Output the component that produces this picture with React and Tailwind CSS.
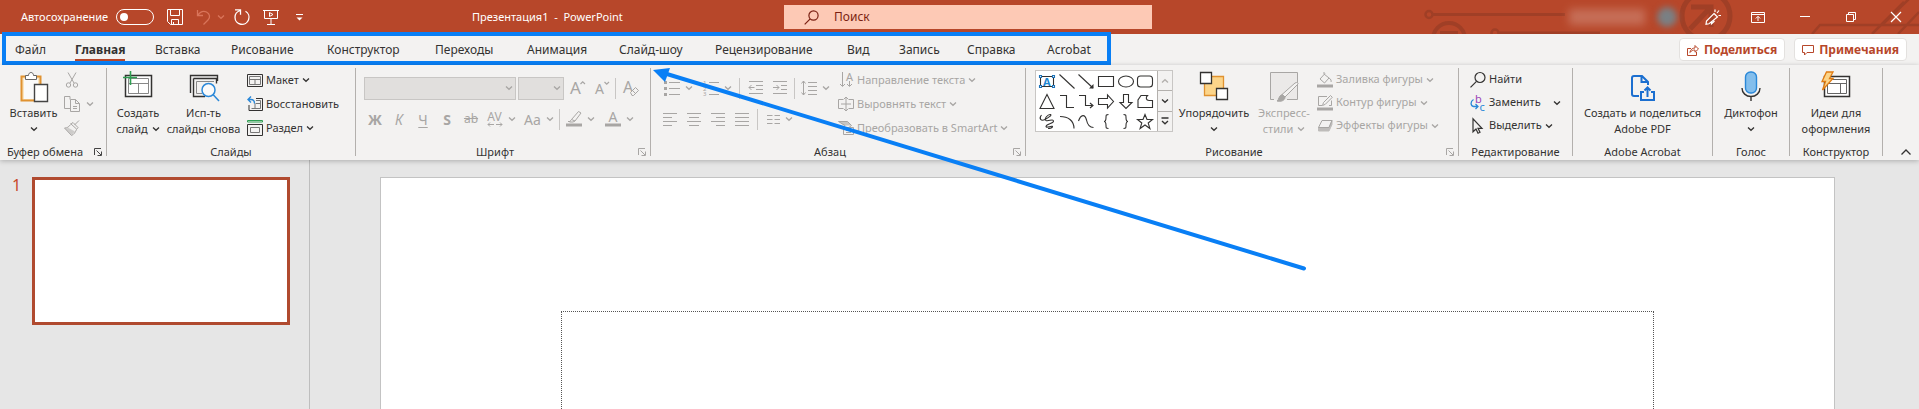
import React from "react";

const TABS = [
  ["Файл", "w-15"],
  ["Главная", "w-20"],
  ["Вставка", "w-19"],
  ["Рисование", "w-24"],
  ["Конструктор", "w-27"],
  ["Переходы", "w-23"],
  ["Анимация", "w-23"],
  ["Слайд-шоу", "w-24"],
  ["Рецензирование", "w-33"],
  ["Вид", "w-13"],
  ["Запись", "w-17"],
  ["Справка", "w-20"],
  ["Acrobat", "w-16"],
];

function Svg({ w = 16, h = 16, className = "", children, sw = 1 }) {
  return (
    <svg width={w} height={h} viewBox={`0 0 ${w} ${h}`} fill="none" stroke="currentColor" strokeWidth={sw} className={`shrink-0 overflow-visible ${className}`} aria-hidden="true">
      {children}
    </svg>
  );
}

function Glyph({ x, y, size, color = "currentColor", bold, children }) {
  return (
    <text x={x} y={y} fontSize={size} fontWeight={bold ? 700 : 400} fill={color} stroke="none">
      {children}
    </text>
  );
}

function Chevron({ className = "" }) {
  return (
    <Svg w={8} h={8} sw={1.3} className={className}>
      <path d="M1 2.500 4 5.300 7 2.500" />
    </Svg>
  );
}

function Launcher({ dim }) {
  return (
    <button aria-label="Параметры группы" className={`absolute right-1 bottom-0 ${dim ? "text-[#a8a6a4]" : "text-[#444444]"}`}>
      <Svg w={8} h={8}>
        <path d="M.500 7V.500H7M2.500 2.500 7 7M7.500 3.500v4h-4" />
      </Svg>
    </button>
  );
}

function Group({ label, width, launcher, dim, children }) {
  return (
    <section className={`relative flex shrink-0 flex-col border-r border-[#b3b0ad] ${width}`}>
      <div className="flex h-[78px]">{children}</div>
      <div className={`h-[10px] text-center leading-[11px] whitespace-nowrap ${launcher ? "pr-4" : ""}`}>{label}</div>
      {launcher && <Launcher dim={dim} />}
    </section>
  );
}

function Big({ icon, line1, line2, chevron, width, dim }) {
  return (
    <button className={`flex shrink-0 flex-col items-center pt-1 leading-4 whitespace-nowrap ${width} ${dim ? "text-[#a8a6a4]" : ""}`}>
      <span className="flex h-[33px] items-start">{icon}</span>
      <span>{line1}</span>
      <span className="flex h-4 items-center gap-1">
        {line2}
        {chevron && <Chevron />}
      </span>
    </button>
  );
}

function Row({ icon, text, chevron, dim, height = "h-6", gap = "gap-[3px]" }) {
  return (
    <button className={`flex items-center gap-[3px] whitespace-nowrap ${height} ${dim ? "text-[#a8a6a4]" : ""}`}>
      {icon}
      <span className={`flex items-center ${gap}`}>
        {text}
        {chevron && <Chevron />}
      </span>
    </button>
  );
}

function Cell({ label, width = "w-6", chevron, children }) {
  return (
    <button aria-label={label} className={`flex h-6 shrink-0 items-center justify-center gap-[5px] ${width}`}>
      {children}
      {chevron && <Chevron />}
    </button>
  );
}

function Divider() {
  return <span className="h-[21px] w-px shrink-0 bg-[#c8c6c4]" />;
}

function Lines({ rows }) {
  return (
    <Svg>
      {rows.map(([a, b], i) => (
        <path key={i} d={`M${a} ${2.5 + i * 4}H${b}`} />
      ))}
    </Svg>
  );
}

function TitleBar() {
  return (
    <header className="relative flex h-[34px] shrink-0 items-center overflow-hidden bg-[#b7472a] text-white">
      <svg className="absolute top-0 right-0" width="499" height="34" viewBox="0 0 499 34" fill="none" stroke="#a03f26" aria-hidden="true">
        <circle cx="9" cy="14.500" r="3.500" strokeWidth="2.500" />
        <path d="M13 14.500H145" strokeWidth="3" />
        <circle cx="29" cy="39" r="16" strokeWidth="4" />
        <path d="M20 33H38" strokeWidth="4" />
        <circle cx="75" cy="33" r="3.500" strokeWidth="2.500" />
        <path d="M79 33H180" strokeWidth="3" />
        <circle cx="286" cy="16" r="24" strokeWidth="5" />
        <path d="M271 7h20v20M291 7 270 29" strokeWidth="5" />
        <path d="M392 34 400 25H462L490 -2M452 34 484 2M462 25H499M478 34 499 12" strokeWidth="2.500" />
      </svg>
      <label className="relative flex items-center gap-2 pl-[21px]">
        Автосохранение
        <input type="checkbox" className="peer sr-only" />
        <span className="flex h-4 w-[38px] items-center rounded-full border border-white pl-[3px]">
          <span className="size-2 rounded-full bg-white" />
        </span>
      </label>
      <div className="relative flex items-center pl-3">
        <button aria-label="Сохранить" className="flex w-[18px] justify-center">
          <Svg><path d="M.500.500h15v15h-12l-3-3zM3.500.500v6h9v-6M4.500 15.500v-5h7v5M6.500 13v2.500" /></Svg>
        </button>
        <button aria-label="Отменить" className="ml-3 flex items-center gap-[5px] text-[#d9745a]">
          <Svg sw={1.3}><path d="M1.500 1v5.500H7M1.500 6.500C4 3 7.500 1.500 10.500 3c3.500 1.800 4 5.500 1.500 8l-4.500 4.500" /></Svg>
          <Chevron />
        </button>
        <button aria-label="Повторить" className="ml-[9px]">
          <Svg sw={1.3}><path d="M1 .800h5.500v5M6.200 1.500C3 2.500 1 5 1 8.300a7 7 0 1 0 10.500-6" /></Svg>
        </button>
        <button aria-label="Начать показ" className="ml-[13px]">
          <Svg><path d="M0 1.500h16M1.500 1.500v8h13v-8M8 9.500v6M4 15.500h8M6.500 3.500v4l3.500-2z" /></Svg>
        </button>
        <button aria-label="Настройка панели" className="ml-4">
          <Svg w={9} h={9}><path d="M1 1.500h7" /><path d="M1.500 4.500h6l-3 3z" fill="currentColor" stroke="none" /></Svg>
        </button>
      </div>
      <h1 className="absolute left-[472px] whitespace-pre">Презентация1  -  PowerPoint</h1>
      <label className="absolute inset-y-[5px] left-[784px] flex w-[368px] items-center bg-[#fdc9b5] pl-5 text-[12px] text-[#7a1f12]">
        <Svg w={15} h={15} sw={1.2}><circle cx="9.500" cy="5.500" r="4.600" /><path d="M6.200 8.800.700 14.300" /></Svg>
        <input aria-label="Поиск" placeholder="Поиск" className="ml-[15px] w-60 bg-transparent outline-none placeholder:text-[#7a1f12]" />
      </label>
      <div className="relative ml-auto flex items-center">
        <span className="mr-3 h-4 w-[76px] bg-[#cd7f6b] opacity-70 blur-[4px]" />
        <span className="mr-7 size-5 rounded-full bg-[#7a8084] blur-[3px]" />
        <button aria-label="Новые возможности" className="w-[18px]">
          <Svg sw={1.2}><path d="M9 4.500 12.500 8 4 14.800 1 15.300 1.500 12zM6.500 13v1.800L9.500 12M10 3V.500M12 4l2-2.500M13.500 6.500H16" /></Svg>
        </button>
        <button aria-label="Параметры ленты" className="ml-7 w-4">
          <Svg w={14} h={11}><path d="M.500.500h13v10H.500zM.500 2.500h13M7 9V4.500M4.800 6.500 7 4.300l2.200 2.200" /></Svg>
        </button>
        <button aria-label="Свернуть" className="ml-8 w-3"><Svg w={12} h={12}><path d="M1 5.500h10" /></Svg></button>
        <button aria-label="Восстановить окно" className="ml-[34px] w-3"><Svg w={12} h={12}><path d="M1.500 3.500h7v7h-7zM3.500 3.500v-2h7v7h-2" /></Svg></button>
        <button aria-label="Закрыть" className="mr-[17px] ml-[33px] w-3"><Svg w={12} h={12} sw={1.2}><path d="M1 1l10 10M11 1 1 11" /></Svg></button>
      </div>
    </header>
  );
}

function TabBar() {
  return (
    <div className="flex h-[31px] shrink-0 items-center justify-between text-[12px]">
      <nav className="relative flex h-full items-start pt-1.5 pl-[15px]">
        {TABS.map(([name, width]) => (
          <div key={name} className={`flex ${width}`}>
            <a href="#" className={`border-b-2 leading-[19px] whitespace-nowrap ${name === "Главная" ? "border-[#b7472a] font-bold" : "border-transparent"}`}>
              {name}
            </a>
          </div>
        ))}
        <span className="pointer-events-none absolute -top-0.5 right-0 bottom-0 left-0.5 border-4 border-[#097ff5]" />
      </nav>
      <div className="flex gap-[9px] pr-3 font-bold text-[#b7472a]">
        <button className="flex h-[23px] items-center gap-[5px] rounded-sm border border-[#e3e1df] bg-white px-[7px]">
          <Svg w={12} h={12}><path d="M4 4.500H.500v7h9V8M2.800 8.500C3.500 5.500 5.500 4 8 4V1.500L11.500 5 8 8.200V6C6 6 4.500 6.800 2.800 8.500z" /></Svg>
          Поделиться
        </button>
        <button className="flex h-[23px] items-center gap-[5px] rounded-sm border border-[#e3e1df] bg-white px-[7px]">
          <Svg w={12} h={12}><path d="M.500 1.500h11v7H5L2.500 11V8.500h-2z" /></Svg>
          Примечания
        </button>
      </div>
    </div>
  );
}

const SHAPES = [
  <g key="t"><path d="M2 3.500h12M2 13.500h12M1.500 4v9M14.500 4v9" /><path d="M.500 2.500h2v2h-2zM13.500 2.500h2v2h-2zM.500 12.500h2v2h-2zM13.500 12.500h2v2h-2z" fill="#fff" stroke="#1e73b8" /><Glyph x="4" y="12.500" size="11" bold color="#1e86d2">A</Glyph></g>,
  <path key="l" d="M.500 1.500 15.500 15.500" />,
  <g key="a"><path d="M.500 1.500 15 15" /><path d="M15.500 11v4.500H11z" fill="currentColor" stroke="none" /></g>,
  <path key="r" d="M.500 3.500h15v10H.500z" />,
  <ellipse key="e" cx="8" cy="8.500" rx="7.500" ry="5.500" />,
  <rect key="rr" x=".5" y="3" width="15" height="11" rx="3" />,
  <path key="tr" d="M8 1.500 15 15.500H1z" />,
  <path key="el" d="M1 2.500h6.500v12H15" />,
  <g key="ea"><path d="M1 2.500h6.500v10H14" /><path d="M12 10l3 2.500L12 15" /></g>,
  <path key="ar" d="M.500 5.500h9V2l6 6.500-6 6.500v-3.500h-9z" />,
  <path key="ad" d="M5.500 1.500h5v8h3.500l-6 6-6-6h3.500z" />,
  <path key="fr" d="M4 2.500h6.500c-2 2-1.500 5 1.500 5h3.500v7H1V7z" />,
  <path key="sc" d="M2.500 2C-.500 5.500 2 8.500 6 6.500c4-2 7-4.500 5.500-5C9 1 4.500 6 7 7.500c2.500 1 7-2 7.500.500.500 2.500-7.500 3-7.500 5.500 0 2 6.500-1.500 6.500.300C13 15 11 15.500 9 15.500" />,
  <path key="ac" d="M1 3.500c8 0 14 4 14 12" />,
  <path key="cv" d="M.500 8C3 1 7 1 8.500 7c1 5 3.500 7.500 7 7.500" />,
  <path key="lb" d="M10.500 1.500c-2.500 0-2.500.500-2.500 3s0 4-2 4c2 0 2 1.500 2 4s0 3 2.500 3" />,
  <path key="rb" d="M5.500 1.500c2.500 0 2.500.500 2.500 3s0 4 2 4c-2 0-2 1.500-2 4s0 3-2.500 3" />,
  <path key="st" d="M8 1.500 10 6.500h5.500l-4.300 3.500 1.700 5.500L8 12l-4.900 3.500L4.800 10 .500 6.500H6z" />,
];

function Ribbon() {
  return (
    <div className="relative z-10 flex shrink-0 items-start pt-[3px] pb-1 shadow-[0_1px_5px_rgba(0,0,0,0.25)]">
      <Group label="Буфер обмена" width="w-[107px]" launcher>
        <Big width="ml-2 w-[51px]" line1="Вставить" chevron icon={
          <Svg w={30} h={31}>
            <path d="M2.500 4.500h19v24h-19z" stroke="#e09230" strokeWidth="2" fill="#fbe5bf" />
            <path d="M5 7h14v20H5z" fill="#fafafa" stroke="none" />
            <path d="M6.500 7.500v-4h3c0-4 5-4 5 0h3v4z" fill="#fff" stroke="#666" />
            <path d="M15.500 12.500h13v17h-13z" fill="#fff" stroke="#444" strokeWidth="1.400" />
          </Svg>} />
        <div className="ml-[5px] flex flex-col text-[#a8a6a4]">
          <button aria-label="Вырезать" className="flex h-6 items-center">
            <Svg><path d="M4 .500 10 11M12 .500 6 11" /><circle cx="4.500" cy="13" r="2.200" /><circle cx="11.500" cy="13" r="2.200" /></Svg>
          </button>
          <button aria-label="Копировать" className="flex h-6 items-center gap-1.5">
            <Svg><path d="M6 3.500V.500H.500v12H6M6.500 3.500h5l4 4v8h-9zM11.500 3.500v4h4M9 10.500h4M9 12.500h4" /></Svg>
            <Chevron />
          </button>
          <button aria-label="Формат по образцу" className="flex h-6 items-center">
            <Svg><path d="M15 .500 10.500 5M6.500 3.500l6 5.500M7 4l2-1.500 5 5-1.500 2M6.500 4.500C5 7 3 8 .500 8l7 7.500c2.500-1 4-3.500 5-6" /><path d="M4.500 8 1 8.500l6.500 6.500 3.500-3.500z" fill="currentColor" opacity=".5" stroke="none" /></Svg>
          </button>
        </div>
      </Group>

      <Group label="Слайды" width="w-[249px]">
        <Big width="ml-1.5 w-[50px]" line1="Создать" line2="слайд" chevron icon={
          <Svg w={30} h={30}>
            <path d="M2.500 3.500h26v21h-26z" strokeWidth="1.500" fill="#fff" />
            <path d="M5.500 6.500h20v15h-20zM15.500 11.500v10M5.500 11.500h20" stroke="#888" />
            <path d="M7.500 -1v14M0 5.500h14" stroke="#2f9e52" strokeWidth="1.600" />
          </Svg>} />
        <Big width="w-[81px]" line1="Исп-ть" line2="слайды снова" icon={
          <Svg w={32} h={32}>
            <path d="M2.500 21V3.500h27V9M5.500 6.500h23v5M5.500 6.500v18H17" strokeWidth="1.400" />
            <path d="M8.500 9.500H26M8.500 9.500v12H14" stroke="#888" />
            <circle cx="20.500" cy="18" r="6.500" stroke="#2b88d8" strokeWidth="1.500" fill="#fafafa" />
            <path d="M25 22.500 31 29" stroke="#2b88d8" strokeWidth="1.500" />
          </Svg>} />
        <div className="ml-[3px] flex flex-col">
          <Row text="Макет" chevron icon={<Svg><path d="M.500 2.500h15v12H.500z" /><path d="M2.500 4.500h11v8h-11zM2.500 7.500h11M8 7.500v5" stroke="#777" /></Svg>} />
          <Row text="Восстановить" icon={<Svg><path d="M9 2.500h6.500v12H2V9" /><path d="M9 4.500h4.500v8h-9M8 7v6M9 7.500h4" stroke="#777" /><path d="M4 .500 1 3.500l3 3M1 3.500h3c2.500 0 3.500 1.500 3.500 4" stroke="#2b88d8" strokeWidth="1.400" /></Svg>} />
          <Row text="Раздел" chevron icon={<Svg><path d="M.500.500h15v1.500H.500z" stroke="#2f9e52" /><path d="M.500 4.500h15v11H.500z" /><path d="M3.500 7.500h9v5h-9z" stroke="#777" /></Svg>} />
        </div>
      </Group>

      <Group label="Шрифт" width="w-[295px]" launcher dim>
        <div className="flex flex-col gap-[7px] pt-2 pl-2 text-[#a8a6a4]">
          <div className="flex h-6 items-center">
            <button aria-label="Шрифт" className="flex h-[23px] w-[152px] items-center justify-end border border-[#c8c6c4] bg-[#e1dfdd] pr-0.5"><Chevron /></button>
            <button aria-label="Размер шрифта" className="ml-0.5 flex h-[23px] w-[46px] items-center justify-end border border-[#c8c6c4] bg-[#e1dfdd] pr-0.5"><Chevron /></button>
            <Cell label="Увеличить размер" width="ml-[3px] w-[22px]"><Svg><Glyph x="0" y="13.500" size="17">A</Glyph><path d="M10.500 4l2.200-2.200L15 4" strokeWidth="1.200" /></Svg></Cell>
            <Cell label="Уменьшить размер" width="w-[26px]"><Svg><Glyph x="1" y="13.500" size="14">A</Glyph><path d="M10.500 2l2.200 2.200L15 2" strokeWidth="1.200" /></Svg></Cell>
            <Divider />
            <Cell label="Очистить формат" width="w-[30px]"><Svg><Glyph x="0" y="12.500" size="16">A</Glyph><path d="M7.500 12.500 12.500 7.500l3 3-5 5H9zM9.500 10.500l3 3" fill="#f3f2f1" /></Svg></Cell>
          </div>
          <div className="-ml-px flex h-6 items-center text-[14px]">
            <Cell label="Полужирный"><b>Ж</b></Cell>
            <Cell label="Курсив"><i>К</i></Cell>
            <Cell label="Подчеркнутый"><span className="underline underline-offset-2">Ч</span></Cell>
            <Cell label="Тень"><b>S</b></Cell>
            <Cell label="Зачеркнутый"><s className="text-[12px]">ab</s></Cell>
            <Cell label="Интервал" width="w-9" chevron>
              <span className="flex flex-col items-center text-[12px] leading-[11px]">AV<Svg w={16} h={5}><path d="M7 2.500H1l2-2M1 2.500l2 2M9 2.500h6l-2-2M15 2.500l-2 2" /></Svg></span>
            </Cell>
            <Cell label="Регистр" width="w-10" chevron>Aa</Cell>
            <Divider />
            <Cell label="Выделение" width="w-10" chevron><Svg><path d="M5.500 8.500 12.500.500l2.500 1.500-6 8zM5.500 8.500 3.500 11H7l2-1M2 10.500h2" /><path d="M0 12.500h16v3H0z" fill="currentColor" stroke="none" /></Svg></Cell>
            <Cell label="Цвет текста" width="w-[38px]" chevron><Svg><Glyph x="3.500" y="11" size="14">A</Glyph><path d="M0 12.500h16v3H0z" fill="currentColor" stroke="none" /></Svg></Cell>
          </div>
        </div>
      </Group>

      <Group label="Абзац" width="w-[375px]" launcher dim>
        <div className="flex w-[187px] shrink-0 flex-col gap-[7px] pt-2 pl-2 text-[#a8a6a4]">
          <div className="flex h-6 items-center">
            <Cell label="Маркеры" width="w-[39px]" chevron><Svg><path d="M5 2.500h11M5 8.500h11M5 14.500h11" /><path d="M0 1h3v3H0zM0 7h3v3H0zM0 13h3v3H0z" fill="currentColor" stroke="none" /></Svg></Cell>
            <Cell label="Нумерация" width="w-[39px]" chevron><Svg><path d="M6 2.500h10M6 8.500h10M6 14.500h10" /><Glyph x="0" y="5" size="6">1</Glyph><Glyph x="0" y="10.500" size="6">2</Glyph><Glyph x="0" y="16" size="6">3</Glyph></Svg></Cell>
            <span className="w-0.5" /><Divider />
            <Cell label="Уменьшить отступ" width="ml-1 w-6"><Svg><path d="M1 1.500h14M8 5.500h7M8 9.500h7M1 13.500h14M6.500 7.500H1M3.500 5 1 7.500 3.500 10" /></Svg></Cell>
            <Cell label="Увеличить отступ"><Svg><path d="M1 1.500h14M9 5.500h6M9 9.500h6M1 13.500h14M1 7.500h6M4.500 5 7 7.500 4.500 10" /></Svg></Cell>
            <span className="w-0.5" /><Divider />
            <Cell label="Междустрочный интервал" width="w-[41px]" chevron><Svg><path d="M7 2.500h9M7 6.500h9M7 10.500h9M7 14.500h9M2.500 1v14M.500 3.500l2-2.500 2 2.500M.500 12.500l2 2.500 2-2.500" /></Svg></Cell>
          </div>
          <div className="-ml-px flex h-6 items-center">
            <Cell label="По левому краю"><Lines rows={[[1, 15], [1, 10], [1, 15], [1, 10]]} /></Cell>
            <Cell label="По центру"><Lines rows={[[1, 15], [3, 13], [1, 15], [3, 13]]} /></Cell>
            <Cell label="По правому краю"><Lines rows={[[1, 15], [6, 15], [1, 15], [6, 15]]} /></Cell>
            <Cell label="По ширине"><Lines rows={[[1, 15], [1, 15], [1, 15], [1, 15]]} /></Cell>
            <span className="w-[3px]" /><Divider />
            <Cell label="Колонки" width="w-11" chevron><Svg w={13}><path d="M0 4.500h5.500M7.500 4.500h5.500M0 8.500h5.500M7.500 8.500h5.500M0 12.500h5.500M7.500 12.500h5.500" /></Svg></Cell>
          </div>
        </div>
        <div className="flex flex-col">
          <Row dim text="Направление текста" chevron icon={<Svg><path d="M4.500 0v14M2 12l2.500 2.500L7 12M11.500 9v5M9 12l2.500 2.500L14 12" /><Glyph x="8" y="8.500" size="11">A</Glyph></Svg>} />
          <Row dim text="Выровнять текст" chevron icon={<Svg><path d="M5 3.500H.500v9H5M11 3.500h4.500v9H11M8 1v14M5.500 3.500 8 1l2.500 2.500M5.500 12.500 8 15l2.500-2.500M3 8h10" /></Svg>} />
          <Row dim text="Преобразовать в SmartArt" chevron icon={<Svg><path d="M.500 1.500h9l4 4-4 3H4l3-3zM5.500 7.500h10v7h-10zM8 10.500h5M8 12.500h5" /><path d="M.500 1.500h9l4 4H6z" fill="currentColor" opacity=".6" stroke="none" /></Svg>} />
        </div>
      </Group>

      <Group label="Рисование" width="w-[433px]" launcher dim>
        <div className="mt-0.5 ml-[9px] flex h-[62px] w-[138px] shrink-0 border border-[#c8c6c4] bg-white">
          <div className="grid flex-1 grid-cols-6 pl-[3px]">
            {SHAPES.map((s, i) => (
              <button key={i} aria-label={`Фигура ${i + 1}`} className="flex h-5 w-4 items-center"><Svg sw={1.1}>{s}</Svg></button>
            ))}
          </div>
          <div className="flex w-[15px] flex-col divide-y divide-[#b3b0ad] border-l border-[#b3b0ad] bg-[#f3f2f1]">
            <button aria-label="Вверх" className="flex flex-1 items-center justify-center text-[#b3b0ad]"><Chevron className="rotate-180" /></button>
            <button aria-label="Вниз" className="flex flex-1 items-center justify-center"><Chevron /></button>
            <button aria-label="Ещё" className="flex flex-1 items-center justify-center"><Svg w={8} h={8} sw={1.3}><path d="M.500 1h7M1 4l3 2.800L7 4" /></Svg></button>
          </div>
        </div>
        <Big width="ml-1 w-[74px]" line1="Упорядочить" chevron icon={
          <Svg w={28} h={28} sw={1.3}>
            <path d="M4.500 4.500h19v19h-19z" fill="#fcd58a" stroke="#e09230" />
            <path d="M.500.500h11v11H.500zM16.500 16.500h11v11h-11z" fill="#fff" />
          </Svg>} />
        <Big dim width="ml-1 w-[58px]" line1="Экспресс-" line2="стили" chevron icon={
          <Svg w={30} h={30}>
            <path d="M5 27.500H1.500v-27h27v27H18" fill="#ebe9e8" />
            <path d="M29 12 16 25l-3-2.500L26 11c2-1 3.500-.500 3 1z" fill="#f3f2f1" />
            <path d="M16 25c0 4-5 5-8 4 2-1 1.500-5 5-6.500z" fill="currentColor" />
          </Svg>} />
        <div className="ml-1 flex flex-col">
          <Row dim height="h-[23px]" text="Заливка фигуры" chevron icon={<Svg><path d="M8 1.500 3 7l4.500 4L12 6 7 2V0M12 6c2 1 2.500 3 2 4" /><path d="M0 12.500h16v3H0z" fill="currentColor" stroke="none" /></Svg>} />
          <Row dim height="h-[23px]" text="Контур фигуры" chevron icon={<Svg><path d="M10 1.500H1.500v9H5M12 10.500h2.500v-5M5.500 10.500l1-3 7-7 1.800 1.800-7 7z" /><path d="M0 12.500h16v3H0z" fill="currentColor" stroke="none" /></Svg>} />
          <Row dim height="h-[23px]" text="Эффекты фигуры" chevron icon={<Svg><path d="M5 2.500h10l-3 7H1.500z" /><path d="M1.500 9.500v3.500H12l3-6.500v-4l-3 7z" fill="currentColor" opacity=".7" /></Svg>} />
        </div>
      </Group>

      <Group label="Редактирование" width="w-[114px]">
        <div className="ml-[11px] flex flex-col">
          <Row height="h-[23px]" text="Найти" icon={<Svg sw={1.2}><circle cx="10" cy="5.500" r="5" /><path d="M6.500 9.300.500 15.300" /></Svg>} />
          <Row height="h-[23px]" text="Заменить" gap="gap-3" chevron icon={
            <Svg sw={1.3}>
              <Glyph x="5" y="8" size="11" color="#9b3fb5">b</Glyph>
              <Glyph x="9.500" y="15.500" size="11" color="#2b88d8">c</Glyph>
              <path d="M3.500 4.500C0 6.500.500 11 3.500 11.500H8M5.500 9 8 11.500 5.500 14" stroke="#2b88d8" />
            </Svg>} />
          <Row height="h-[23px]" text="Выделить" chevron icon={<Svg sw={1.2}><path d="M3 .800v13l3-2.800 2 4.300 2-1-2-4h4z" /></Svg>} />
        </div>
      </Group>

      <Group label="Adobe Acrobat" width="w-[140px]">
        <Big width="w-full" line1="Создать и поделиться" line2="Adobe PDF" icon={
          <Svg w={26} h={30} sw={2} className="text-[#1b6fd0]">
            <path d="M9 24H4a2 2 0 0 1-2-2V6a2 2 0 0 1 2-2h8l6 6v3M11.500 4.500V10H17" />
            <path d="M14 20h-3v8h13v-8h-3M17.500 25v-9M14.500 18.500l3-3 3 3" />
          </Svg>} />
      </Group>

      <Group label="Голос" width="w-[77px]">
        <Big width="w-full" line1="Диктофон" chevron icon={
          <Svg w={20} h={31} sw={1.4}>
            <rect x="4.500" y="0" width="11" height="21" rx="5" fill="#83beec" stroke="#2b88d8" />
            <path d="M1 16c0 5 4 8.500 9 8.500s9-3.500 9-8.500M10 24.500V29" />
          </Svg>} />
      </Group>

      <Group label="Конструктор" width="w-[93px]">
        <Big width="w-full" line1="Идеи для" line2="оформления" icon={
          <Svg w={30} h={30}>
            <path d="M3.500 4.500h25v20h-25z" strokeWidth="1.500" fill="#fff" />
            <path d="M6.500 7.500h19v14h-19zM6.500 11.500h19M19.500 11.500v10" stroke="#666" />
            <path d="M5.500 0H12L8.500 6.500H12L1.500 18 4.500 9.500H1z" fill="#fcd58a" stroke="#e07b12" strokeWidth="1.300" />
          </Svg>} />
      </Group>
      <button aria-label="Свернуть ленту" className="mr-[7px] ml-auto self-end">
        <Svg w={12} h={8} sw={1.3}><path d="M1.500 6.500 6 2l4.500 4.500" /></Svg>
      </button>
    </div>
  );
}

export default function App() {
  return (
    <div className="relative flex h-screen flex-col overflow-hidden bg-[#f3f2f1] font-['Noto_Sans',sans-serif] text-[11px] text-[#333231]">
      <TitleBar />
      <TabBar />
      <Ribbon />
      <main className="flex min-h-0 flex-1 bg-[#e6e6e6]">
        <aside className="flex w-[310px] shrink-0 items-start border-r border-[#bebebe] pt-[17px]">
          <span className="w-8 pl-3 text-[16px] leading-4 text-[#c8492c]">1</span>
          <button aria-label="Слайд 1" className="h-[148px] w-[258px] border-3 border-[#b04a2f] bg-white" />
        </aside>
        <div className="flex flex-1 overflow-hidden pt-[17px] pr-[84px] pl-[70px]">
          <div className="flex-1 border border-b-0 border-[#c3c3c3] bg-white px-[180px] pt-[133px]">
            <div className="h-full border border-b-0 border-dotted border-[#555555]" />
          </div>
        </div>
      </main>
      <svg className="pointer-events-none absolute top-[65px] left-[650px] z-20" width="660" height="210" viewBox="0 0 660 210" aria-hidden="true">
        <path d="M12 7.500 654 203.500" stroke="#097ff5" strokeWidth="4" strokeLinecap="round" />
        <path d="M3 5 20 3 15 17z" fill="#097ff5" />
      </svg>
    </div>
  );
}
